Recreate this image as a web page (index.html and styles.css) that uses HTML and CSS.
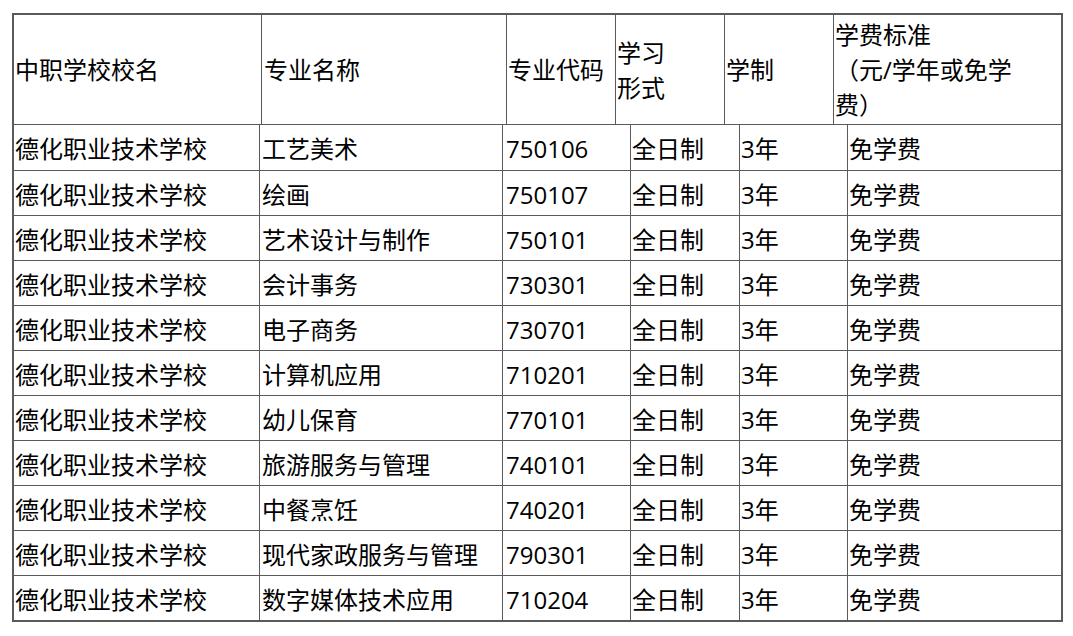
FILE: index.html
```html
<!DOCTYPE html>
<html lang="zh-CN">
<head>
<meta charset="utf-8">
<title>中职学校专业</title>
<link rel="stylesheet" href="styles.css">
</head>
<body>
<div class="page">
  <table class="grid head">
    <colgroup>
      <col class="h1"><col class="h2"><col class="h3"><col class="h4"><col class="h5"><col class="h6">
    </colgroup>
    <tr>
      <td>中职学校校名</td>
      <td>专业名称</td>
      <td>专业代码</td>
      <td>学习<br>形式</td>
      <td>学制</td>
      <td class="fee">学费标准<br>（元/学年或免学费）</td>
    </tr>
  </table>
  <table class="grid body">
    <colgroup>
      <col class="b1"><col class="b2"><col class="b3"><col class="b4"><col class="b5"><col class="b6">
    </colgroup>
    <tr class="first"><td>德化职业技术学校</td><td>工艺美术</td><td>750106</td><td>全日制</td><td>3年</td><td>免学费</td></tr>
    <tr><td>德化职业技术学校</td><td>绘画</td><td>750107</td><td>全日制</td><td>3年</td><td>免学费</td></tr>
    <tr><td>德化职业技术学校</td><td>艺术设计与制作</td><td>750101</td><td>全日制</td><td>3年</td><td>免学费</td></tr>
    <tr><td>德化职业技术学校</td><td>会计事务</td><td>730301</td><td>全日制</td><td>3年</td><td>免学费</td></tr>
    <tr><td>德化职业技术学校</td><td>电子商务</td><td>730701</td><td>全日制</td><td>3年</td><td>免学费</td></tr>
    <tr><td>德化职业技术学校</td><td>计算机应用</td><td>710201</td><td>全日制</td><td>3年</td><td>免学费</td></tr>
    <tr><td>德化职业技术学校</td><td>幼儿保育</td><td>770101</td><td>全日制</td><td>3年</td><td>免学费</td></tr>
    <tr><td>德化职业技术学校</td><td>旅游服务与管理</td><td>740101</td><td>全日制</td><td>3年</td><td>免学费</td></tr>
    <tr><td>德化职业技术学校</td><td>中餐烹饪</td><td>740201</td><td>全日制</td><td>3年</td><td>免学费</td></tr>
    <tr><td>德化职业技术学校</td><td>现代家政服务与管理</td><td>790301</td><td>全日制</td><td>3年</td><td>免学费</td></tr>
    <tr><td>德化职业技术学校</td><td>数字媒体技术应用</td><td>710204</td><td>全日制</td><td>3年</td><td>免学费</td></tr>
  </table>
</div>
</body>
</html>
```

FILE: styles.css
```css
html, body {
  margin: 0;
  padding: 0;
  background: #ffffff;
}

.page {
  padding: 13px 0 0 12px;
  font-family: "Open Sans", "Noto Sans CJK SC", sans-serif;
  font-size: 24px;
  color: #000000;
}

.grid {
  box-sizing: border-box;
  width: 1051px;
  table-layout: fixed;
  border-collapse: separate;
  border-spacing: 0;
  border: 2px solid #5a5a5a;
}

.grid td {
  box-sizing: border-box;
  padding: 0 1px;
  vertical-align: middle;
  text-align: left;
  border-left: 1px solid #5a5a5a;
  white-space: normal;
}

.grid td:first-child {
  border-left: none;
}

.head {
  border-bottom: none;
}

.head td {
  height: 109px;
  line-height: 35px;
}

.head td.fee {
  padding-right: 24px;
}

.body {
  border-top-width: 1px;
}

.body td {
  height: 45px;
  padding-top: 3px;
  border-top: 1px solid #5a5a5a;
  line-height: 34px;
  white-space: nowrap;
}

.body tr.first td {
  border-top: none;
}

.head td:nth-child(2) { padding-left: 2px; }

.h1 { width: 247px; }
.h2 { width: 245px; }
.h3 { width: 109px; }
.h4 { width: 109px; }
.h5 { width: 109px; }
.h6 { width: 228px; }

.b1 { width: 245px; }
.b2 { width: 243px; }
.b3 { width: 128px; }
.b4 { width: 109px; }
.b5 { width: 108px; }
.b6 { width: 214px; }

.body td:nth-child(3) { padding-left: 3px; }
.body td:nth-child(2) { padding-left: 2px; }
```
